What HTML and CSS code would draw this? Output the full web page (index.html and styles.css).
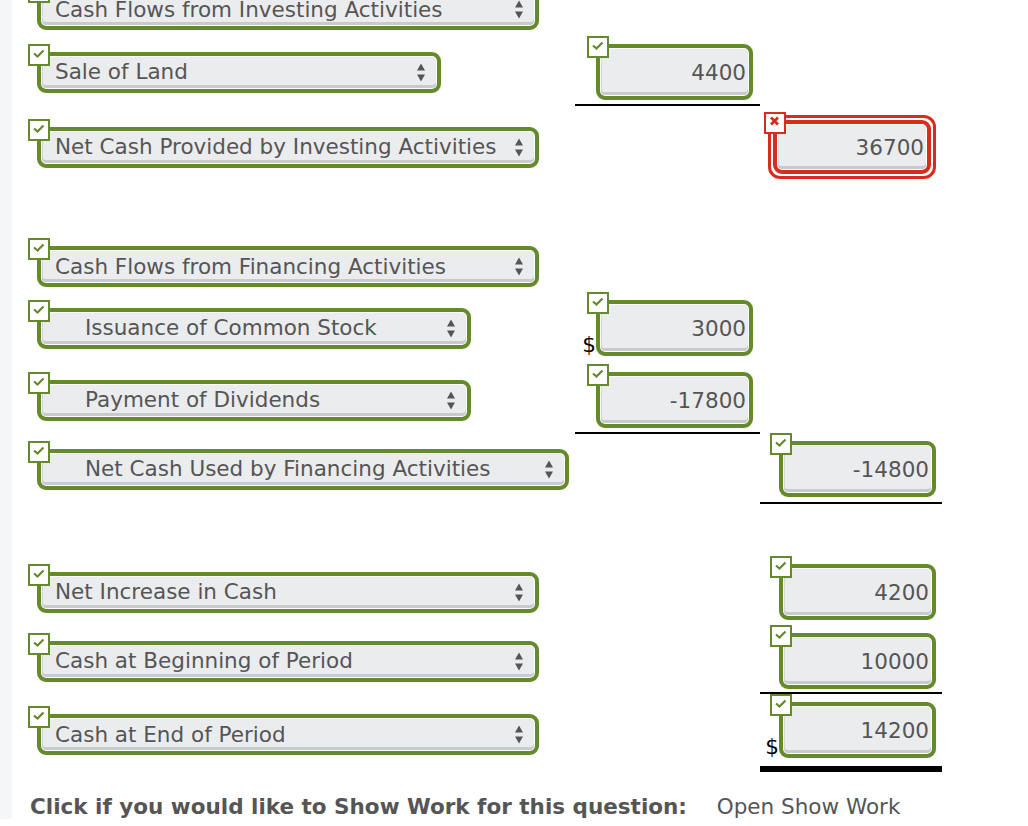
FILE: index.html
```html
<!DOCTYPE html>
<html lang="en">

<head>
  <meta charset="UTF-8">
  <meta name="viewport" content="width=device-width, initial-scale=1.0">
  <title>Statement of Cash Flows</title>
  <link rel="stylesheet" href="styles.css">
</head>

<body>
  <div class="page">

    <div class="sheet">

      <div class="row first">
        <div class="desc">
          <div class="pick w-lg">
            <span class="mark ok"><svg viewBox="0 0 18 18"><path d="M4 7.5l3.5 3 6-6" /></svg></span>
            <span class="pick-text">Cash Flows from Investing Activities</span>
            <svg class="updown" viewBox="0 0 10 19"><path d="M1 7.5L5 .5l4 7zM1 11.5h8L5 18.5z" /></svg>
          </div>
        </div>
        <div class="amt"></div>
        <div class="amt total"></div>
      </div>

      <div class="row mt-14">
        <div class="desc">
          <div class="pick w-sm">
            <span class="mark ok"><svg viewBox="0 0 18 18"><path d="M4 7.5l3.5 3 6-6" /></svg></span>
            <span class="pick-text">Sale of Land</span>
            <svg class="updown" viewBox="0 0 10 19"><path d="M1 7.5L5 .5l4 7zM1 11.5h8L5 18.5z" /></svg>
          </div>
        </div>
        <div class="amt">
          <div class="num">
            <span class="mark ok"><svg viewBox="0 0 18 18"><path d="M4 7.5l3.5 3 6-6" /></svg></span>
            4400
          </div>
        </div>
        <div class="amt total"></div>
      </div>

      <div class="row rules mt-4">
        <div></div>
        <div class="rule"></div>
        <div></div>
      </div>

      <div class="row mt-9">
        <div class="desc">
          <div class="pick w-lg">
            <span class="mark ok"><svg viewBox="0 0 18 18"><path d="M4 7.5l3.5 3 6-6" /></svg></span>
            <span class="pick-text">Net Cash Provided by Investing Activities</span>
            <svg class="updown" viewBox="0 0 10 19"><path d="M1 7.5L5 .5l4 7zM1 11.5h8L5 18.5z" /></svg>
          </div>
        </div>
        <div class="amt"></div>
        <div class="amt total">
          <div class="wrong">
            <div class="num">
              <span class="mark bad"><svg viewBox="0 0 18 18"><path d="M5 3.5l7 7M12 3.5l-7 7" /></svg></span>
              36700
            </div>
          </div>
        </div>
      </div>

      <div class="row mt-67">
        <div class="desc">
          <div class="pick w-lg">
            <span class="mark ok"><svg viewBox="0 0 18 18"><path d="M4 7.5l3.5 3 6-6" /></svg></span>
            <span class="pick-text">Cash Flows from Financing Activities</span>
            <svg class="updown" viewBox="0 0 10 19"><path d="M1 7.5L5 .5l4 7zM1 11.5h8L5 18.5z" /></svg>
          </div>
        </div>
        <div class="amt"></div>
        <div class="amt total"></div>
      </div>

      <div class="row mt-13">
        <div class="desc">
          <div class="pick w-md indent">
            <span class="mark ok"><svg viewBox="0 0 18 18"><path d="M4 7.5l3.5 3 6-6" /></svg></span>
            <span class="pick-text">Issuance of Common Stock</span>
            <svg class="updown" viewBox="0 0 10 19"><path d="M1 7.5L5 .5l4 7zM1 11.5h8L5 18.5z" /></svg>
          </div>
        </div>
        <div class="amt">
          <span class="cur">$</span>
          <div class="num">
            <span class="mark ok"><svg viewBox="0 0 18 18"><path d="M4 7.5l3.5 3 6-6" /></svg></span>
            3000
          </div>
        </div>
        <div class="amt total"></div>
      </div>

      <div class="row mt-16">
        <div class="desc">
          <div class="pick w-md indent">
            <span class="mark ok"><svg viewBox="0 0 18 18"><path d="M4 7.5l3.5 3 6-6" /></svg></span>
            <span class="pick-text">Payment of Dividends</span>
            <svg class="updown" viewBox="0 0 10 19"><path d="M1 7.5L5 .5l4 7zM1 11.5h8L5 18.5z" /></svg>
          </div>
        </div>
        <div class="amt">
          <div class="num">
            <span class="mark ok"><svg viewBox="0 0 18 18"><path d="M4 7.5l3.5 3 6-6" /></svg></span>
            -17800
          </div>
        </div>
        <div class="amt total"></div>
      </div>

      <div class="row rules mt-4">
        <div></div>
        <div class="rule"></div>
        <div></div>
      </div>

      <div class="row mt-7">
        <div class="desc">
          <div class="pick w-xl indent">
            <span class="mark ok"><svg viewBox="0 0 18 18"><path d="M4 7.5l3.5 3 6-6" /></svg></span>
            <span class="pick-text">Net Cash Used by Financing Activities</span>
            <svg class="updown" viewBox="0 0 10 19"><path d="M1 7.5L5 .5l4 7zM1 11.5h8L5 18.5z" /></svg>
          </div>
        </div>
        <div class="amt"></div>
        <div class="amt total">
          <div class="num">
            <span class="mark ok"><svg viewBox="0 0 18 18"><path d="M4 7.5l3.5 3 6-6" /></svg></span>
            -14800
          </div>
        </div>
      </div>

      <div class="row rules mt-5">
        <div></div>
        <div></div>
        <div class="rule"></div>
      </div>

      <div class="row mt-60">
        <div class="desc">
          <div class="pick w-lg">
            <span class="mark ok"><svg viewBox="0 0 18 18"><path d="M4 7.5l3.5 3 6-6" /></svg></span>
            <span class="pick-text">Net Increase in Cash</span>
            <svg class="updown" viewBox="0 0 10 19"><path d="M1 7.5L5 .5l4 7zM1 11.5h8L5 18.5z" /></svg>
          </div>
        </div>
        <div class="amt"></div>
        <div class="amt total">
          <div class="num">
            <span class="mark ok"><svg viewBox="0 0 18 18"><path d="M4 7.5l3.5 3 6-6" /></svg></span>
            4200
          </div>
        </div>
      </div>

      <div class="row mt-13">
        <div class="desc">
          <div class="pick w-lg">
            <span class="mark ok"><svg viewBox="0 0 18 18"><path d="M4 7.5l3.5 3 6-6" /></svg></span>
            <span class="pick-text">Cash at Beginning of Period</span>
            <svg class="updown" viewBox="0 0 10 19"><path d="M1 7.5L5 .5l4 7zM1 11.5h8L5 18.5z" /></svg>
          </div>
        </div>
        <div class="amt"></div>
        <div class="amt total">
          <div class="num">
            <span class="mark ok"><svg viewBox="0 0 18 18"><path d="M4 7.5l3.5 3 6-6" /></svg></span>
            10000
          </div>
        </div>
      </div>

      <div class="row rules mt-3">
        <div></div>
        <div></div>
        <div class="rule"></div>
      </div>

      <div class="row last mt-8">
        <div class="desc">
          <div class="pick w-lg">
            <span class="mark ok"><svg viewBox="0 0 18 18"><path d="M4 7.5l3.5 3 6-6" /></svg></span>
            <span class="pick-text">Cash at End of Period</span>
            <svg class="updown" viewBox="0 0 10 19"><path d="M1 7.5L5 .5l4 7zM1 11.5h8L5 18.5z" /></svg>
          </div>
        </div>
        <div class="amt"></div>
        <div class="amt total">
          <span class="cur">$</span>
          <div class="num">
            <span class="mark ok"><svg viewBox="0 0 18 18"><path d="M4 7.5l3.5 3 6-6" /></svg></span>
            14200
          </div>
        </div>
      </div>

      <div class="row rules mt-8">
        <div></div>
        <div></div>
        <div class="rule thick"></div>
      </div>

    </div>

    <p class="show-work">
      <strong>Click if you would like to Show Work for this question:</strong>
      <a href="#">Open Show Work</a>
    </p>

  </div>
</body>

</html>
```

FILE: styles.css
```css
* {
  padding: 0;
  border: 0;
  margin: 0;
  box-sizing: border-box;
}

body {
  font-family: "DejaVu Sans", Verdana, sans-serif;
  font-size: 21.5px;
  color: #555;
  background-color: white;
  overflow: hidden;
}

.page {
  min-height: 100vh;
  border-left: 12px solid #f5f6f8;
}

.sheet {
  margin-top: -11px;
}

.row {
  display: grid;
  grid-template-columns: 563px 185px 182px;
  align-items: center;
}

.row.last {
  align-items: end;
}

.mt-3 { margin-top: 3px; }
.mt-4 { margin-top: 4px; }
.mt-5 { margin-top: 5px; }
.mt-7 { margin-top: 7px; }
.mt-8 { margin-top: 8px; }
.mt-9 { margin-top: 9px; }
.mt-13 { margin-top: 13px; }
.mt-14 { margin-top: 14px; }
.mt-16 { margin-top: 16px; }
.mt-60 { margin-top: 60px; }
.mt-67 { margin-top: 67px; }

.desc {
  padding-left: 25px;
}

.last .desc {
  margin-bottom: 3px;
}

/* dropdowns */
.pick {
  position: relative;
  display: flex;
  align-items: center;
  height: 41px;
  padding-left: 14px;
  padding-right: 11px;
  border: 4px solid #648a2b;
  border-radius: 9px;
  background-color: #ebecee;
  box-shadow: inset 0 0 0 1px white, inset 0 -3px 0 1px #c9cacc, inset 1px 0 0 1px #d5d6d8;
  white-space: nowrap;
}

.pick.indent {
  padding-left: 44px;
}

.w-sm { width: 404px; }
.w-md { width: 434px; }
.w-lg { width: 502px; }
.w-xl { width: 532px; }

.pick-text {
  flex: 1;
  line-height: 30px;
}

.updown {
  width: 10px;
  height: 19px;
  fill: #555;
}

/* amount boxes */
.amt {
  display: flex;
  justify-content: flex-end;
  align-items: flex-end;
  padding-right: 7px;
}

.amt.total {
  padding-right: 6px;
}

.cur {
  color: black;
  line-height: 20px;
  margin-bottom: 1px;
}

.num {
  position: relative;
  width: 157px;
  height: 56px;
  padding-right: 3px;
  border: 4px solid #648a2b;
  border-radius: 9px;
  background-color: #ebecee;
  box-shadow: inset 0 0 0 1px white, inset 0 -3px 0 1px #c9cacc, inset 1px 0 0 1px #d5d6d8;
  text-align: right;
  line-height: 49px;
}

.wrong {
  padding: 2px;
  border: 3px solid #d62d20;
  border-radius: 12px;
  background-color: white;
}

.wrong .num {
  width: 158px;
  height: 54px;
  line-height: 47px;
  border-color: #d62d20;
}

.mark {
  position: absolute;
  top: -12px;
  left: -13px;
  width: 22px;
  height: 22px;
  border: 2px solid #648a2b;
  background-color: white;
  z-index: 1;
}

.mark svg {
  display: block;
  width: 18px;
  height: 18px;
  fill: none;
  stroke: #648a2b;
  stroke-width: 2.2;
}

.mark.bad {
  border-color: #d62d20;
}

.mark.bad svg {
  stroke: #d62d20;
  stroke-width: 2.8;
}

.rule {
  height: 2px;
  background-color: black;
}

.rule.thick {
  height: 6px;
}

/* footer */
.show-work {
  margin-top: 23px;
  padding-left: 18px;
  line-height: 24px;
}

.show-work strong {
  margin-right: 23px;
}

.show-work a {
  color: #555;
  text-decoration: none;
}
```
